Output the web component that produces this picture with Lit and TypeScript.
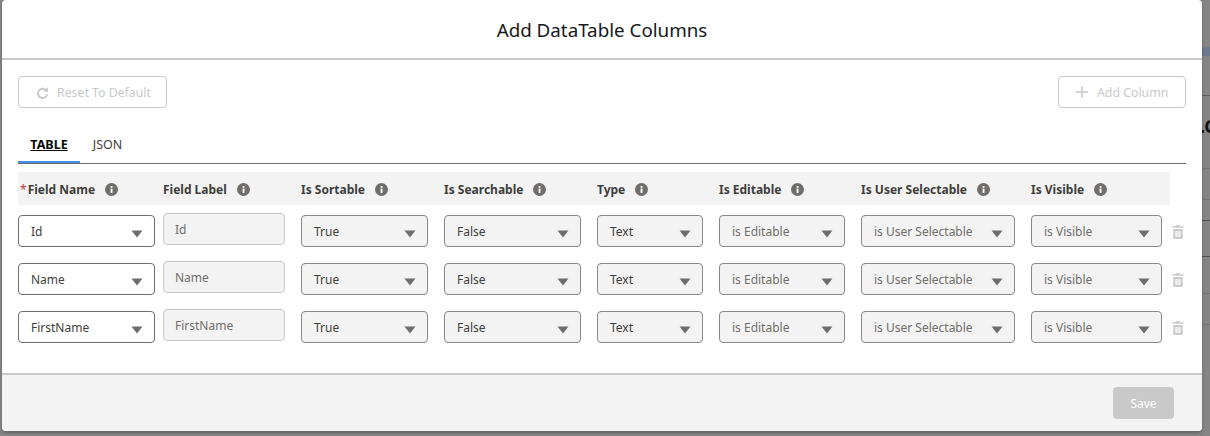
import { LitElement, html, css } from "lit";
import { customElement } from "lit/decorators.js";

const caret = html`<svg class="caret" viewBox="0 0 12 8"><path d="M0.5 0.5h11L6 7.5z"/></svg>`;
const info = html`<svg class="info" viewBox="0 0 13 13"><circle cx="6.5" cy="6.5" r="6.5" fill="#706e6b"/><rect x="5.6" y="5.6" width="1.9" height="4.4" fill="#fff"/><rect x="5.6" y="3" width="1.9" height="1.8" fill="#fff"/></svg>`;
const trash = html`<svg class="trash" viewBox="0 0 12 14"><path fill="#c9c9c9" d="M4.5 0h3v1.2H11.5v1.6H.5V1.2h4zM1.3 4h9.4v8.8c0 .7-.5 1.2-1.2 1.2h-7c-.7 0-1.2-.5-1.2-1.2zM3.4 6v6h1.2V6zm2 0v6h1.2V6zm2 0v6h1.2V6z"/></svg>`;

const headers = ["Field Name", "Field Label", "Is Sortable", "Is Searchable", "Type", "Is Editable", "Is User Selectable", "Is Visible"];
const rows = ["Id", "Name", "FirstName"];
const backLines = [
  { top: 95, color: "#5c5c5c" },
  { top: 168, color: "#737373" },
  { top: 199, color: "#737373" },
  { top: 220, color: "#4f4f4f" },
  { top: 256, color: "#4f4f4f" },
  { top: 293, color: "#737373" },
  { top: 324, color: "#737373" },
];

@customElement("app-root")
export class AppRoot extends LitElement {
  static styles = css`
    :host { display: block; position: relative; width: 1210px; height: 436px; box-sizing: border-box; background: #858585; padding: 0 8px 5px 2px; font-family: "Noto Sans", "Open Sans", sans-serif; font-size: 12px; color: #3e3e3c; overflow: hidden; }
    .bl { position: absolute; left: 1202px; width: 8px; height: 1px; }
    .patch { position: absolute; left: 1202px; top: 47px; width: 8px; height: 9px; background: #6d7a8c; }
    .ctext { position: absolute; left: 1200px; top: 114px; font-size: 18px; font-weight: 700; color: #111; line-height: 24px; }
    .modal { position: relative; height: 431px; background: #fff; border-radius: 4px; display: flex; flex-direction: column; overflow: hidden; box-shadow: 0 2px 3px rgba(0,0,0,.25); }
    .head { height: 56px; flex: none; border-bottom: 2px solid #c9c9c9; display: flex; align-items: center; justify-content: center; font-size: 18.8px; color: #181818; padding-top: 3px; margin-top: -1px; }
    .body { flex: 1; padding: 16px 16px 0; }
    .actions { display: flex; justify-content: space-between; }
    .btn { height: 32px; box-sizing: border-box; border: 1px solid #c9c9c9; border-radius: 4px; display: flex; align-items: center; color: #c9c9c9; background: #fff; font-size: 12.3px; }
    .reset { width: 149px; padding-left: 17px; gap: 8px; }
    .add { width: 128px; padding-left: 16px; gap: 8px; }
    .btn svg { flex: none; }
    .tabs { margin-top: 30px; height: 25px; border-bottom: 1px solid #706e6b; display: flex; }
    .tab { width: 62px; box-sizing: border-box; height: 25px; border-bottom: 2px solid transparent; text-align: center; line-height: 13px; color: #3e3e3c; font-size: 12.5px; }
    .tab.on { border-bottom-color: #3f8ee9; font-weight: 700; color: #080707; text-decoration: underline; }
    .tab.json { width: 55px; }
    .grid { margin-top: 8px; display: grid; grid-template-columns: 145px 138px 143px 153px 122px 142px 170px 141px 24px; width: 1180px; }
    .grid > * { min-width: 0; }
    .hrow { display: grid; grid-template-columns: subgrid; grid-column: 1 / 9; background: #f3f3f3; height: 33px; box-sizing: border-box; padding-top: 2px; align-items: center; margin-right: 2px; }
    .h { display: flex; align-items: center; font-weight: 700; color: #3e3e3c; white-space: nowrap; gap: 10px; }
    .h .req { color: #c23934; margin-right: -9px; font-weight: 400; padding-left: 2px; }
    .info { width: 13px; height: 13px; flex: none; }
    .row { display: grid; grid-template-columns: subgrid; grid-column: 1 / -1; height: 48px; align-items: start; }
    .row > * { margin-right: 16px; }
    .row > :nth-child(1) { margin-right: 8px; }
    .row > :nth-child(8) { margin-right: 10px; }
    .sel { margin-top: 10px; height: 32px; box-sizing: border-box; border: 1px solid #8a8886; border-radius: 4px; background: #f3f3f3; display: flex; align-items: center; justify-content: space-between; padding: 0 11px 0 12px; color: #3e3e3c; white-space: nowrap; }
    .sel.key { background: #fff; border-color: #706e6b; }
    .sel.off { color: #706e6b; }
    .inp { margin-top: 8px; height: 32px; box-sizing: border-box; border: 1px solid #c9c9c9; border-radius: 4px; background: #f3f3f3; display: flex; align-items: center; padding: 0 11px; color: #706e6b; }
    .caret { width: 12px; height: 8px; fill: #706e6b; flex: none; margin-top: 5px; }
    .trash { width: 12px; height: 14px; margin: 20px 0 0 0; }
    .foot { height: 56px; flex: none; border-top: 2px solid #c9c9c9; background: #f3f3f3; display: flex; justify-content: flex-end; align-items: center; padding: 0 28px 0 0; }
    .save { width: 61px; height: 32px; border-radius: 4px; background: #c9c9c9; color: #fff; display: flex; align-items: center; justify-content: center; }
  `;

  render() {
    const sel = (t: string, cls = "") => html`<div class="sel ${cls}"><span>${t}</span>${caret}</div>`;
    return html`
    <div class="patch"></div>
    <div class="ctext">.C</div>
    ${backLines.map((l) => html`<div class="bl" style="top:${l.top}px;background:${l.color}"></div>`)}
    <div class="modal">
      <div class="head">Add DataTable Columns</div>
      <div class="body">
        <div class="actions">
          <div class="btn reset"><svg width="13" height="13" viewBox="0 0 14 14" fill="none" stroke="#c9c9c9" stroke-width="2"><path d="M11.5 5.5A5 5 0 1 0 12 9"/><path d="M13 1v5.2H7.8" stroke="none" fill="#c9c9c9"/></svg><span>Reset To Default</span></div>
          <div class="btn add"><svg width="14" height="14" viewBox="0 0 14 14" stroke="#c9c9c9" stroke-width="1.5"><path d="M7 1v12M1 7h12"/></svg><span>Add Column</span></div>
        </div>
        <div class="tabs"><div class="tab on">TABLE</div><div class="tab json">JSON</div></div>
        <div class="grid">
          <div class="hrow">
            ${headers.map((h, i) => html`<div class="h">${i === 0 ? html`<span class="req">*</span>` : ""}<span>${h}</span>${info}</div>`)}
          </div>
          ${rows.map((r) => html`<div class="row">
            ${sel(r, "key")}
            <div class="inp">${r}</div>
            ${sel("True")}${sel("False")}${sel("Text")}
            ${sel("is Editable", "off")}${sel("is User Selectable", "off")}${sel("is Visible", "off")}
            ${trash}
          </div>`)}
        </div>
      </div>
      <div class="foot"><div class="save">Save</div></div>
    </div>`;
  }
}
